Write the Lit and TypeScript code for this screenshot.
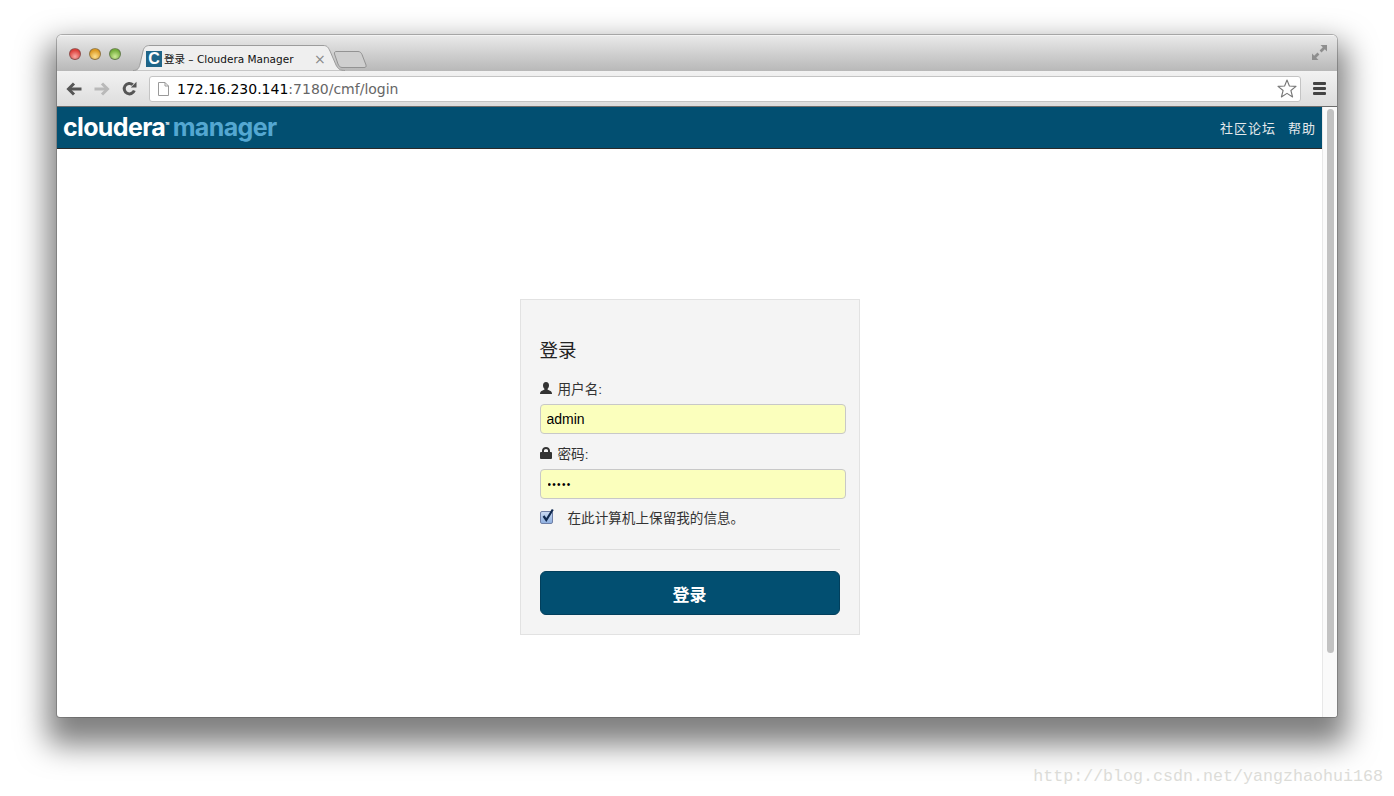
import { LitElement, html, css } from 'lit';
import { customElement, state } from 'lit/decorators.js';

@customElement('app-root')
export class AppRoot extends LitElement {
  @state() username = 'admin';
  @state() password = 'admin';
  @state() remember = true;

  static styles = css`
    :host {
      display: block;
      position: relative;
      width: 1394px;
      height: 796px;
      overflow: hidden;
      background: #fff;
      font-family: "Liberation Sans", "Noto Sans CJK SC", sans-serif;
    }
    .desktop {
      box-sizing: border-box;
      height: 796px;
      padding: 35px 57px 79px;
    }
    .window {
      height: 682px;
      display: flex;
      flex-direction: column;
      border-radius: 5px 5px 3px 3px;
      background: #fff;
      box-shadow: 0 0 0 1px rgba(70, 70, 70, 0.35), 0 18px 30px 10px rgba(0, 0, 0, 0.5);
      overflow: hidden;
    }
    .titlebar {
      flex: none;
      box-sizing: border-box;
      height: 36px;
      display: flex;
      align-items: flex-end;
      position: relative;
      padding-left: 76px;
      background: linear-gradient(#e9e9e9, #d0d0d0 50%, #b8b8b8);
      border-top: 1px solid #f4f4f4;
    }
    .lights {
      position: absolute;
      left: 12px;
      top: 12px;
      display: flex;
      gap: 8px;
    }
    .light {
      width: 12px;
      height: 12px;
      border-radius: 50%;
      box-sizing: border-box;
      border: 1px solid rgba(80, 80, 80, 0.55);
    }
    .light.red { background: radial-gradient(circle at 50% 75%, #f9a9a4, #dc3f3a 70%); }
    .light.yellow { background: radial-gradient(circle at 50% 75%, #fde08f, #dd9a22 70%); }
    .light.green { background: radial-gradient(circle at 50% 75%, #cdeb98, #74ae3c 70%); }
    .tab {
      position: relative;
      box-sizing: border-box;
      width: 212px;
      height: 26px;
      flex: none;
      display: flex;
      align-items: center;
      padding: 2px 0 0 13px;
      font-family: "DejaVu Sans", "Noto Sans CJK SC", sans-serif;
      font-size: 10.5px;
      color: #111;
    }
    .tab svg.shape {
      position: absolute;
      left: 0;
      top: 0;
    }
    .tab > span, .tab > .favicon {
      position: relative;
    }
    .favicon {
      flex: none;
      width: 16px;
      height: 16px;
      margin-right: 2px;
      background: #1f6588;
      color: #fff;
      font: bold 16px/16px "Liberation Sans", sans-serif;
      text-align: center;
    }
    .tab .title {
      width: 150px;
      margin-top: -2px;
      white-space: nowrap;
    }
    .tab .close {
      color: #888;
      font-size: 14px;
      line-height: 14px;
    }
    .newtab {
      flex: none;
      margin: 0 0 2px -12px;
      position: relative;
    }
    .expand {
      position: absolute;
      right: 10px;
      top: 9px;
    }
    .toolbar {
      flex: none;
      box-sizing: border-box;
      height: 36px;
      display: flex;
      align-items: center;
      padding: 0 11px 0 9px;
      background: linear-gradient(#f2f2f2, #dddddd);
      border-bottom: 1px solid #6d6d6d;
    }
    .nav {
      flex: none;
      width: 83px;
      display: flex;
      gap: 12px;
      align-items: center;
    }
    .url {
      flex: 1;
      box-sizing: border-box;
      height: 26px;
      display: flex;
      align-items: center;
      padding: 0 3px 0 8px;
      background: #fff;
      border: 1px solid #c4c4c4;
      border-radius: 3px;
      font-family: "DejaVu Sans", sans-serif;
      font-size: 14px;
      color: #666;
    }
    .url .doc {
      margin-right: 8px;
    }
    .url b {
      font-weight: normal;
      color: #000;
    }
    .url .addr {
      flex: 1;
    }
    .menu {
      flex: none;
      margin-left: 12px;
      display: flex;
      flex-direction: column;
      gap: 2px;
    }
    .menu i {
      display: block;
      width: 13px;
      height: 3px;
      border-radius: 1px;
      background: #444;
    }
    .viewport {
      flex: 1;
      min-height: 0;
      display: flex;
    }
    .page {
      flex: 1;
      min-width: 0;
      display: flex;
      flex-direction: column;
    }
    .scrollbar {
      flex: none;
      box-sizing: border-box;
      width: 15px;
      padding: 2px 3px 0 4px;
      background: #fafafa;
      border-left: 1px solid #e8e8e8;
    }
    .thumb {
      height: 544px;
      border-radius: 4px;
      background: #c2c2c2;
    }
    .navbar {
      flex: none;
      box-sizing: border-box;
      height: 42px;
      display: flex;
      align-items: center;
      justify-content: space-between;
      padding: 0 6px 0 6px;
      background: #024f71;
      border-bottom: 1px solid #2a2a2a;
    }
    .logo {
      margin-top: -2px;
      font-family: Inter, "Liberation Sans", sans-serif;
      font-size: 25px;
      font-weight: 700;
      letter-spacing: -0.65px;
      color: #fff;
      white-space: nowrap;
    }
    .logo sup {
      font-size: 3px;
      vertical-align: 11px;
      line-height: 0;
      margin-right: 4px;
    }
    .logo span {
      color: #54a7d1;
    }
    .links {
      display: flex;
      gap: 12px;
      font-size: 13px;
      color: #e4e9ec;
      letter-spacing: 1px;
    }
    .content {
      flex: 1;
      display: flex;
      justify-content: center;
      padding-top: 150px;
    }
    .card {
      box-sizing: border-box;
      width: 340px;
      height: 336px;
      padding: 39px 19px 0;
      background: #f4f4f4;
      border: 1px solid #e2e2e2;
      color: #333;
      font-size: 13.6px;
    }
    .card h2 {
      margin: 0 0 16px;
      font-size: 18.5px;
      font-weight: normal;
      line-height: 24px;
      color: #222;
    }
    .field {
      display: flex;
      align-items: center;
      gap: 6px;
      height: 18px;
      margin-bottom: 7px;
    }
    .card input.text {
      display: block;
      box-sizing: border-box;
      width: 306px;
      height: 30px;
      margin: 0 0 10px;
      padding: 0 6px;
      background: #fbffbd;
      border: 1px solid #c8c8c8;
      border-radius: 4px;
      outline: none;
      font: 14px "Liberation Sans", sans-serif;
      color: #000;
    }
    .card input.secret {
      font-size: 10px;
      letter-spacing: 1.300px;
      padding-left: 7px;
    }
    .check {
      display: flex;
      align-items: center;
      height: 18px;
      margin: -1px 0 23px;
      gap: 15px;
    }
    .box {
      position: relative;
      flex: none;
      width: 13px;
      height: 13px;
    }
    .box input {
      appearance: none;
      display: block;
      box-sizing: border-box;
      width: 13px;
      height: 13px;
      margin: 0;
      border: 1px solid #6f7fa6;
      border-radius: 2px;
      background: linear-gradient(#c9d9f2, #8fb0e0);
    }
    .box svg {
      position: absolute;
      left: 2px;
      top: -3px;
      pointer-events: none;
    }
    hr {
      width: 300px;
      height: 1px;
      margin: 0 0 21px;
      border: 0;
      background: #dcdcdc;
    }
    button {
      display: block;
      width: 300px;
      height: 44px;
      border: 1px solid #023f5c;
      border-radius: 6px;
      background: #024f71;
      color: #fff;
      font: bold 17px "Liberation Sans", "Noto Sans CJK SC", sans-serif;
    }
    .watermark {
      position: absolute;
      right: 11px;
      top: 767px;
      font: 16.67px "Liberation Mono", monospace;
      color: #dcdcd8;
    }
  `;

  render() {
    return html`
      <div class="desktop">
        <div class="window">
          <div class="titlebar">
            <div class="lights">
              <div class="light red"></div>
              <div class="light yellow"></div>
              <div class="light green"></div>
            </div>
            <div class="tab">
              <svg class="shape" width="212" height="26" viewBox="0 0 212 26">
                <path d="M0 25.5 C5 25.5 6 23 7 19 L10 6 C11 2 13 .5 17 .5 L190 .5 C194 .5 195 2 197 6 L203 20 C205 24 207 25.5 212 25.5 L212 26 L0 26 Z" fill="#efefef" stroke="#9c9c9c"/>
              </svg>
              <div class="favicon">C</div>
              <span class="title">登录 – Cloudera Manager</span>
              <span class="close">×</span>
            </div>
            <svg class="newtab" width="34" height="19" viewBox="0 0 34 19">
              <path d="M3 1.500 L25 1.500 C27 1.500 28 2.500 29 4.500 L33 15 C33.500 17 32.500 17.500 31 17.500 L9 17.500 C7 17.500 6 16 5 14 L1.500 4 C1 2.500 2 1.500 3 1.500 Z" fill="#cfcfcf" stroke="#939393"/>
            </svg>
            <svg class="expand" width="15" height="15" viewBox="0 0 15 15" fill="#8e8e8e">
              <path d="M8.500 0 H15 V6.500 L12.800 4.300 L9.500 7.500 L7.600 5.500 L10.800 2.300 Z"/>
              <path d="M0 8.500 L2.200 10.700 L5.500 7.500 L7.400 9.500 L4.200 12.700 L6.500 15 H0 Z"/>
            </svg>
          </div>
          <div class="toolbar">
            <div class="nav">
              <svg width="16" height="14" viewBox="0 0 16 14" fill="none" stroke="#555" stroke-width="3">
                <path d="M15.500 7 H3"/><path d="M8 1.500 L2.500 7 L8 12.500"/>
              </svg>
              <svg width="16" height="14" viewBox="0 0 16 14" fill="none" stroke="#b9b9b9" stroke-width="3">
                <path d="M.5 7 H13"/><path d="M8 1.500 L13.500 7 L8 12.500"/>
              </svg>
              <svg width="15" height="15" viewBox="0 0 15 15" fill="none">
                <path d="M12.300 9.500 A5.200 5.200 0 1 1 10.800 3.700" stroke="#555" stroke-width="3"/>
                <path d="M8.800 6.500 L14.500 6.500 L14.500 .8 Z" fill="#555"/>
              </svg>
            </div>
            <div class="url">
              <svg class="doc" width="11" height="14" viewBox="0 0 11 14">
                <path d="M.5 .5 H7 L10.500 4 V13.500 H.5 Z M7 .5 V4 H10.500" fill="#fff" stroke="#9a9a9a"/>
              </svg>
              <span class="addr"><b>172.16.230.141</b>:7180/cmf/login</span>
              <svg width="20" height="19" viewBox="0 0 20 19">
                <path d="M10 1 L12.400 7 L19 7.400 L13.900 11.500 L15.600 18 L10 14.400 L4.400 18 L6.100 11.500 L1 7.400 L7.600 7 Z" fill="#fff" stroke="#777" stroke-width="1.100" stroke-linejoin="round"/>
              </svg>
            </div>
            <div class="menu"><i></i><i></i><i></i></div>
          </div>
          <div class="viewport">
            <div class="page">
              <div class="navbar">
                <div class="logo">cloudera<sup>TM</sup><span>manager</span></div>
                <div class="links"><span>社区论坛</span><span>帮助</span></div>
              </div>
              <div class="content">
                <div class="card">
                  <h2>登录</h2>
                  <div class="field">
                    <svg width="12" height="12" viewBox="0 0 12 12" fill="#333">
                      <path d="M6 0 C8 0 9 1.500 9 3.500 C9 5 8.300 6.300 7.500 7 C7.500 8 9 8.300 10.500 9 C11.500 9.500 12 10.500 12 12 H0 C0 10.500 .5 9.500 1.500 9 C3 8.300 4.500 8 4.500 7 C3.700 6.300 3 5 3 3.500 C3 1.500 4 0 6 0 Z"/>
                    </svg>
                    <span>用户名:</span>
                  </div>
                  <input class="text" type="text" .value=${this.username}
                    @input=${(e: Event) => (this.username = (e.target as HTMLInputElement).value)} />
                  <div class="field">
                    <svg width="12" height="12" viewBox="0 0 12 12" fill="#333">
                      <path fill-rule="evenodd" d="M1 5 H2 V3.800 C2 1.500 3.700 0 6 0 C8.300 0 10 1.500 10 3.800 V5 H11 C11.500 5 12 5.500 12 6 V11 C12 11.500 11.500 12 11 12 H1 C.5 12 0 11.500 0 11 V6 C0 5.500 .5 5 1 5 Z M4 5 H8 V3.800 C8 2.600 7.200 1.900 6 1.900 C4.800 1.900 4 2.600 4 3.800 Z"/>
                    </svg>
                    <span>密码:</span>
                  </div>
                  <input class="text secret" type="password" .value=${this.password}
                    @input=${(e: Event) => (this.password = (e.target as HTMLInputElement).value)} />
                  <label class="check">
                    <span class="box">
                      <input type="checkbox" .checked=${this.remember}
                        @change=${(e: Event) => (this.remember = (e.target as HTMLInputElement).checked)} />
                      ${this.remember
                        ? html`<svg width="12" height="14" viewBox="0 0 12 14" fill="none">
                            <path d="M1.500 8 L4.300 12 L10.800 1.500" stroke="#10294f" stroke-width="2.200"/>
                          </svg>`
                        : ''}
                    </span>
                    <span>在此计算机上保留我的信息。</span>
                  </label>
                  <hr />
                  <button>登录</button>
                </div>
              </div>
            </div>
            <div class="scrollbar"><div class="thumb"></div></div>
          </div>
        </div>
      </div>
      <div class="watermark">http://blog.csdn.net/yangzhaohui168</div>
    `;
  }
}
